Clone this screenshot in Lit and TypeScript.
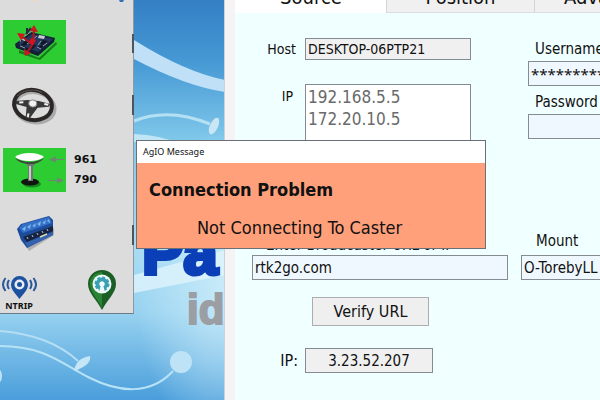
import { LitElement, html, css, svg } from "lit";
import { customElement, property } from "lit/decorators.js";

const boardIcon = svg`
  <svg viewBox="0 0 63 44" width="63" height="44" aria-hidden="true">
    <path d="M16 30 L36 38 L53 22 L54 24 L37 40 L16 33Z" fill="#0b3d10" opacity=".6"/>
    <path d="M12 24 L28 12 L52 18 L51 22 L35 36 L13 28Z" fill="#142036"/>
    <path d="M15 24 L29 14 L50 19 L35 32Z" fill="#24385c"/>
    <path d="M18 25l4-4 4 1-4 4z M26 28l3-4 4 1-3 4z M40 20l5 1-4 4-4-1z M34 28l4-3 3 1-4 3z" fill="#111827"/>
    <path d="M36 15l6 1-1 3-6-1z M20 18l3 1-1 2-3-1z" fill="#c5ccd6"/>
    <path d="M22 16l8-6M17 22l3-8M34 27l4 2M24 24l10-8M40 26l4-3M38 21l-3 4M17 26l5 2" stroke="#8f9db4" stroke-width="1"/>
    <path d="M24 8v6M28 8l-5 6" stroke="#222b3a" stroke-width="2"/>
    <path d="M31 10 L30 24 L25 31 M18 16 L29 24" stroke="#b8141e" stroke-width="2" fill="none"/>
    <path d="M31 5l4 7-8-1z M14 13l8 1-4 6z M21 29l7 4-6 3z M28 18l5 2-3 5-4-2z" fill="#d21420"/>
  </svg>`;

const wheelIcon = svg`
  <svg viewBox="0 0 63 52" width="63" height="52" aria-hidden="true">
    <g transform="rotate(10 30 25)">
      <ellipse cx="32" cy="27" rx="20" ry="15" fill="none" stroke="#aaa" stroke-width="4"/>
      <ellipse cx="30" cy="25" rx="19" ry="15" fill="none" stroke="#2b2727" stroke-width="4"/>
      <path d="M13 19a19 14 0 0 1 24-8" fill="none" stroke="#5a5050" stroke-width="1"/>
      <path d="M12 24 L24 21 L35 20 L47 21 L46 24 L35 27 L29 39 L25 39 L24 28 L13 27Z" fill="#383838"/>
      <path d="M16 25l4-1M41 22l4 0M27 34v4" stroke="#f4f4f4" stroke-width="2"/>
      <ellipse cx="29.500" cy="23.500" rx="4" ry="3.500" fill="#f4f4f4" stroke="#888"/>
    </g>
  </svg>`;

const antennaIcon = svg`
  <svg viewBox="0 0 63 44" width="63" height="44" aria-hidden="true">
    <ellipse cx="29" cy="36" rx="9" ry="3.500" fill="#178a1c"/>
    <ellipse cx="27" cy="34" rx="9" ry="3.500" fill="#101510"/>
    <path d="M22 14h11l-3 5v14h-5V19z" fill="#6d7870"/>
    <path d="M26 18h2v14h-2z" fill="#c5cfc6"/>
    <path d="M12 10q15 8 29 0l-3 3q-3 2-7 3h-7q-6-1-9-3z" fill="#3a4a3a"/>
    <path d="M12 9q5-4 14.500-4T41 9q-5 4-14.500 4T12 9z" fill="#fff"/>
    <path d="M61 11.500H51M45 32.500H55" stroke="#6f8471" stroke-width="1"/>
    <path d="M46 11.500l7-3v6z M61 32.500l-7-3v6z" fill="#6f8471"/>
  </svg>`;

const moduleIcon = svg`
  <svg viewBox="0 0 63 44" width="63" height="44" aria-hidden="true">
    <path d="M20 32l31-12v7L26 43z" fill="#9b9b9b" opacity=".7"/>
    <path d="M14 21 L18 16 L46 8 L50 12 L50 27 L24 40 L18 32Z" fill="#1d4c9c"/>
    <path d="M16 20 L20 16 L46 9 L49 15 L20 25Z" fill="#3470c8"/>
    <path d="M19 21l3 2 1-5zM24 19l3 2 1-5zM29 18l3 1 1-4zM34 16l3 2 1-5zM39 15l3 1 1-4zM44 13l3 2-1-4z" fill="#7eb6ec"/>
    <path d="M20 29 L50 18 L50 23 L24 34Z" fill="#18243f"/>
    <path d="M24 29l1 2M29 27l1 2M34 25l1 2M39 23l1 2M44 21l1 2" stroke="#aac2e8" stroke-width="1"/>
    <path d="M22 35 L50 24 L50 27 L25 39Z" fill="#3563ad"/>
    <path d="M37 29l7-3" stroke="#d8dcb0" stroke-width="1.500"/>
  </svg>`;

const ntripIcon = svg`
  <svg viewBox="0 0 36 24" width="36" height="24" aria-hidden="true">
    <path d="M18.500 0a8.500 8.500 0 0 1 8.500 8.500C27 14 22 18 18.500 23 15 18 10 14 10 8.500A8.500 8.500 0 0 1 18.500 0z" fill="#1d52a0"/>
    <circle cx="18.500" cy="8.500" r="5" fill="#e8edf5"/>
    <circle cx="18.500" cy="8.500" r="2.500" fill="#1d52a0"/>
    <path d="M8 4q-3 4.500 0 9M4.500 2q-5 6.500 0 13M29 4q3 4.500 0 9M32.500 2q5 6.500 0 13" fill="none" stroke="#28579a" stroke-width="2"/>
  </svg>`;

const markerIcon = svg`
  <svg viewBox="0 0 28 40" width="28" height="40" aria-hidden="true">
    <path d="M14 0a14 14 0 0 1 14 14C28 23 19 30 14 40 9 30 0 23 0 14A14 14 0 0 1 14 0z" fill="#1b5e26"/>
    <path d="M14 2A12 12 0 0 0 2 14c0 8 8 15 12 24z" fill="#2b8434"/>
    <circle cx="14" cy="14" r="9.500" fill="#eef8f8"/>
    <circle cx="14" cy="14" r="4.500" fill="none" stroke="#3aa0b4" stroke-width="4"/>
    <circle cx="14" cy="14" r="6.500" fill="none" stroke="#3aa0b4" stroke-width="2" stroke-dasharray="3 2"/>
    <path d="M13 15h2l2 7h-6z" fill="#eef8f8"/>
    <circle cx="14" cy="14" r="2.500" fill="#eef8f8"/>
  </svg>`;

const wallpaper = svg`
  <svg class="art" viewBox="0 0 225 400" width="225" height="400" aria-hidden="true">
    <defs>
      <linearGradient id="sky" x1="0" y1="0" x2="0" y2="1">
        <stop offset="0" stop-color="#347fc4"/>
        <stop offset=".15" stop-color="#4598d4"/>
        <stop offset=".35" stop-color="#80c8ea"/>
        <stop offset=".62" stop-color="#a8dcf4"/>
        <stop offset=".78" stop-color="#98d2f0"/>
        <stop offset="1" stop-color="#4a9edb"/>
      </linearGradient>
      <radialGradient id="glow" cx="1" cy=".72" r=".4">
        <stop offset="0" stop-color="#d2f0fb" stop-opacity=".8"/>
        <stop offset="1" stop-color="#d2f0fb" stop-opacity="0"/>
      </radialGradient>
    </defs>
    <rect width="225" height="400" fill="url(#sky)"/>
    <rect width="225" height="400" fill="url(#glow)"/>
    <path d="M134 40Q185 72 225 80V92Q185 86 134 59z" fill="#bfe0f6"/>
    <path d="M134 121Q168 107 210 124" fill="none" stroke="#b4e0f4" stroke-width="3"/>
    <ellipse cx="214" cy="126" rx="4" ry="9" transform="rotate(25 214 126)" fill="#c8e6f4"/>
    <path d="M134 134Q160 135 180 144L134 142z" fill="#c0e6f6"/>
    <path d="M134 275L225 250V275L134 293z" fill="#dff4fc" opacity=".8"/>
    <path d="M0 331Q50 335 78 361" fill="none" stroke="#b4def4" stroke-width="2"/>
    <path d="M0 346C45 346 62 364 90 378S150 396 173 371" fill="none" stroke="#b8e2f6" stroke-width="2"/>
    <path d="M74 371Q76 358 90 356Q92 365 74 371z" fill="#c5e6f6"/>
    <circle cx="181" cy="362" r="11" fill="#bfe3f6"/>
    <ellipse cx="-2" cy="376" rx="4" ry="7" fill="#bfe3f6"/>
    <text class="brand" x="142" y="274">Pa</text>
    <text class="sub" x="187" y="324">id</text>
  </svg>`;

const shared = css`
  :host { box-sizing: border-box; font-family: "DejaVu Sans Condensed", "Noto Sans", sans-serif; color: #111; }
  *, *::before, *::after { box-sizing: border-box; }
  button, input, textarea { font: inherit; color: inherit; margin: 0; border-radius: 0; }
`;

@customElement("status-panel")
export class StatusPanel extends LitElement {
  static styles = [shared, css`
    :host { display: block; background: #dcdcdc; border-right: 1px solid #8c9aa6; border-bottom: 1px solid #6d7c88; }
    .list { display: flex; flex-direction: column; gap: 16px; padding-left: 3px; }
    .top { height: 4px; }
    .top svg { display: block; }
    .icon { display: block; border: 0; padding: 0; background: none; width: 63px; }
    .icon svg, .link svg { display: block; }
    .on { background: #2ecc33; }
    .gps { display: flex; gap: 8px; }
    .counts { display: flex; flex-direction: column; justify-content: space-between; font: bold 11px/20px "DejaVu Sans", sans-serif; padding: 2px 0; }
    .foot { display: flex; justify-content: space-between; padding-right: 17px; height: 45px; align-items: flex-start; }
    .link { border: 0; padding: 0; background: none; display: flex; flex-direction: column; align-items: center; font: bold 9px/12px "Noto Sans", sans-serif; }
    .ntrip { padding-top: 8px; margin-left: -2px; }
    .marker { padding-top: 2px; }
    .edge { position: absolute; top: 0; right: -1px; }
  `];
  @property({ type: Number }) received = 961;
  @property({ type: Number }) sent = 790;
  render() {
    return html`
      <div class="list">
        <div class="top"><svg width="130" height="4" aria-hidden="true">
          <path d="M28 0h7l-3 1z" fill="#f0d9a0"/><path d="M116 0h5l-1 2h-3z" fill="#3a6fb8"/></svg></div>
        <button class="icon on" aria-label="IMU">${boardIcon}</button>
        <button class="icon" aria-label="Steer">${wheelIcon}</button>
        <div class="gps">
          <button class="icon on" aria-label="GPS">${antennaIcon}</button>
          <div class="counts"><span>${this.received}</span><span>${this.sent}</span></div>
        </div>
        <button class="icon" aria-label="Machine">${moduleIcon}</button>
        <div class="foot">
          <button class="link ntrip">${ntripIcon}<span>NTRIP</span></button>
          <button class="link marker" aria-label="Map">${markerIcon}</button>
        </div>
      </div>
      <svg class="edge" width="2" height="260" aria-hidden="true">
        <path d="M1 34v19M1 95v20M1 225v20" stroke="#4d565e" stroke-width="2"/>
      </svg>`;
  }
}

@customElement("caster-form")
export class CasterForm extends LitElement {
  static styles = [shared, css`
    :host { display: block; background: #f0ffff; border-left: 1px solid #c9d3d8; box-shadow: inset 10px 0 #f5f3f4; padding-left: 10px; overflow: hidden; font-size: 16px; }
    .tabs { display: grid; grid-template-columns: 151px 148px 148px; grid-template-rows: 13px; height: 13px; overflow: hidden; align-items: end; background: #f0f0f0; }
    .tab { border: 0; border-left: 1px solid #d5d5d5; border-bottom: 1px solid #dcdcdc; background: #f0f0f0; height: 32px; padding: 0; font-size: 20px; line-height: 28px; }
    .tab[aria-selected="true"] { background: #fff; border-color: #fff; }
    .body { display: grid; grid-template-columns: 256px minmax(120px, 1fr); column-gap: 13px; grid-template-rows: 190px auto; padding: 25px 0 0 17px; }
    .rows { display: grid; grid-template-columns: 46px 166px; justify-content: start; align-content: start; column-gap: 7px; row-gap: 24px; }
    .rows label { text-align: right; font-size: 14px; line-height: 22px; padding-right: 2px; }
    .rows .ip { padding-right: 5px; line-height: 24px; }
    .field { display: block; width: 100%; height: 25px; border: 1px solid #848b92; background: #f0f8ff; padding: 0 2px; font-size: 15px; line-height: 22px; outline: 0; }
    .rows .host { height: 22px; font-size: 14px; line-height: 20px; background: #f0f0f0; }
    .rows .addresses { height: 120px; background: #fff; color: #6a6a6a; font-size: 17px; line-height: 22px; padding: 1px 2px; resize: none; overflow: hidden; }
    .login { margin-left: 7px; display: grid; align-content: start; }
    .login label, .mount label { padding-left: 7px; line-height: 23px; font-size: 15px; }
    .login .field { margin-bottom: 5px; }
    .login .masked { font-family: "Noto Sans", sans-serif; }
    .url label, .mount label { display: flex; height: 27px; align-items: flex-end; }
    .url label { padding-left: 14px; line-height: 20px; font-size: 15px; }
    .mount label { align-items: center; padding-left: 15px; }
    .verify { display: block; width: 117px; height: 29px; margin: 17px 0 22px 60px; border: 1px solid #adadad; outline: 0; background: #efefef; font-size: 16px; line-height: 24px; padding: 0; }
    .resolved { display: grid; grid-template-columns: 46px 128px; column-gap: 7px; }
    .url .resolved label { display: block; height: 25px; padding: 0; line-height: 25px; text-align: right; font-size: 16px; }
    .resolved .field { background: #f0f0f0; text-align: center; }
  `];
  render() {
    return html`
      <div class="tabs" role="tablist">
        ${["Source", "Position", "Advanced"].map((name, i) => html`
          <button class="tab" role="tab" aria-selected=${i === 0 ? "true" : "false"}>${name}</button>`)}
      </div>
      <div class="body">
        <div class="rows">
          <label for="host">Host</label>
          <input class="field host" id="host" readonly value="DESKTOP-06PTP21">
          <label class="ip" for="addresses">IP</label>
          <textarea class="field addresses" id="addresses" readonly .value=${"192.168.5.5\n172.20.10.5"}></textarea>
        </div>
        <div class="login">
          <label for="user">Username</label>
          <input class="field masked" id="user" value="************">
          <label for="pass">Password</label>
          <input class="field" id="pass" type="password">
        </div>
        <div class="url">
          <label for="url">Enter Broadcaster URL or IP</label>
          <input class="field" id="url" value="rtk2go.com">
          <button class="verify">Verify URL</button>
          <div class="resolved">
            <label for="resolved">IP:</label>
            <input class="field" id="resolved" readonly value="3.23.52.207">
          </div>
        </div>
        <div class="mount">
          <label for="mount">Mount</label>
          <input class="field" id="mount" value="O-TorebyLL">
        </div>
      </div>`;
  }
}

@customElement("message-window")
export class MessageWindow extends LitElement {
  static styles = [shared, css`
    :host { display: block; background: #ffa07a; border: 1px solid #6b7076; }
    .bar { background: #fff; font-family: "Noto Sans", sans-serif; font-size: 9px; line-height: 22px; padding-left: 6px; }
    .title { margin: 0; padding: 14px 12px 0; font-size: 18px; line-height: 26px; }
    .text { margin: 0; padding: 12px 60px 7px; font-size: 18px; line-height: 26px; }
  `];
  @property() heading = "";
  @property() message = "";
  render() {
    return html`
      <div class="bar">AgIO Message</div>
      <h1 class="title">${this.heading}</h1>
      <p class="text">${this.message}</p>`;
  }
}

@customElement("app-root")
export class AppRoot extends LitElement {
  static styles = css`
    :host { display: block; position: relative; min-height: 100vh; overflow: hidden; background: #4a9edb; }
    .art { display: block; }
    .brand { font: 900 62px "Liberation Sans", sans-serif; fill: #0a3fb8; stroke: #0a3fb8; stroke-width: 4px; }
    .sub { font: 900 42px "Liberation Sans", sans-serif; fill: #9b9fa4; stroke: #9b9fa4; stroke-width: 2px; }
    status-panel { position: absolute; left: 0; top: 0; width: 134px; }
    caster-form { position: absolute; left: 224px; right: 0; top: 0; bottom: 0; }
    message-window { position: absolute; left: 136px; top: 140px; width: 350px; }
  `;
  render() {
    return html`
      ${wallpaper}
      <status-panel></status-panel>
      <caster-form></caster-form>
      <message-window role="alertdialog" heading="Connection Problem" message="Not Connecting To Caster"></message-window>`;
  }
}
